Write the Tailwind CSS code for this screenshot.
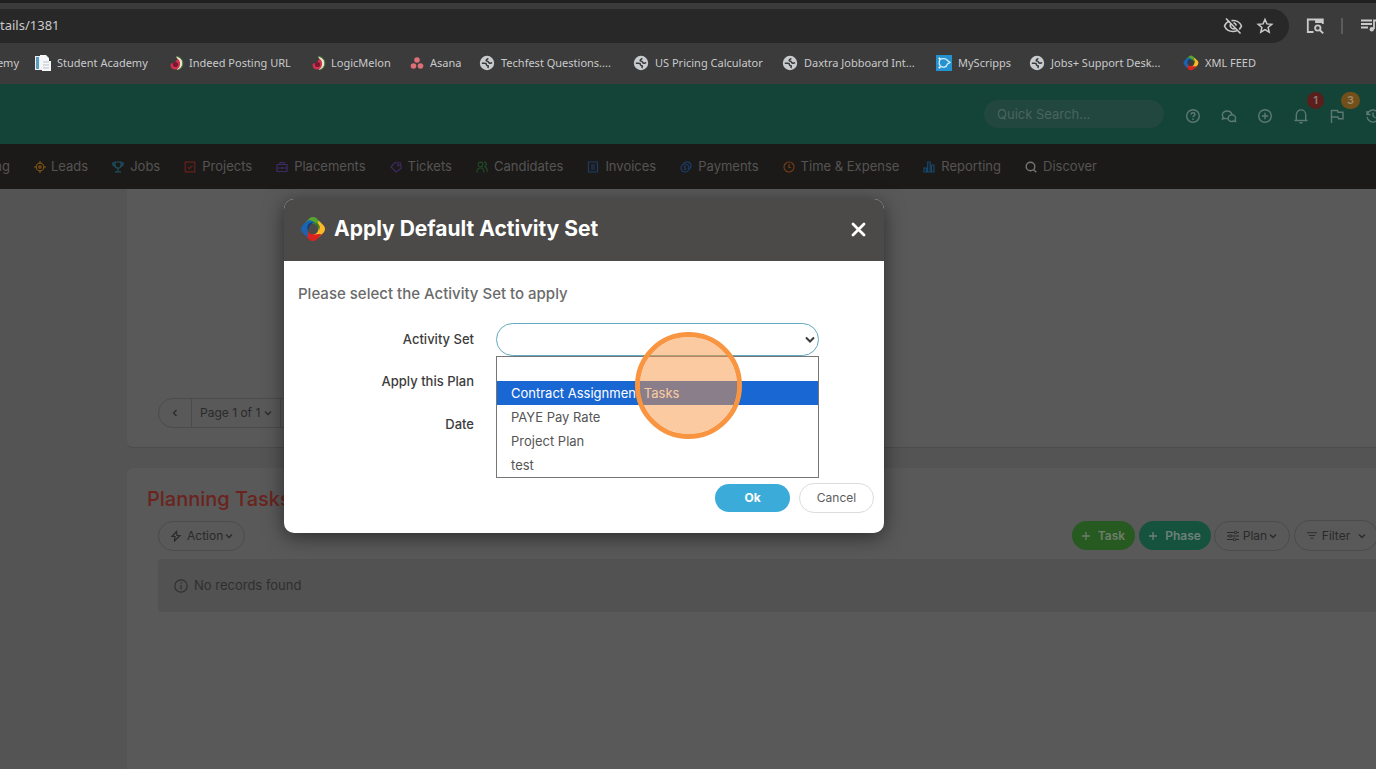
<!DOCTYPE html>
<html lang="en">
<head>
  <meta charset="UTF-8" />
  <meta name="viewport" content="width=device-width, initial-scale=1.0">
  <title>Apply Default Activity Set</title>
  <script src="https://cdn.jsdelivr.net/npm/@tailwindcss/browser@4"></script>
</head>

<body class="relative flex min-h-screen flex-col overflow-hidden bg-[#545454] font-['Inter','Liberation_Sans',sans-serif] text-[13px] text-[#2a2a2a]">

<!-- Shared icons -->
<svg class="hidden">
  <symbol id="globe" viewBox="0 0 16 16">
    <circle cx="8" cy="8" r="7.200" fill="#c9cccf"/>
    <path d="M2.800 8.200h3c1 0 1.700.6 1.700 1.500s.8 1 1.500 1c.5.300.3 1.400-.3 2.300M9 3.200c-.3 1.300-1.800 1-1.800 2.200 0 1 1.300.8 1.900 1.200.8.500.5 1.600 1.600 1.700 1 .1 1.400-.5 2.500-.5" fill="none" stroke="#3b3b3b" stroke-width="1.600"/>
  </symbol>
  <symbol id="melon" viewBox="0 0 16 16">
    <path d="M7 1.500c8 1 9 11 1.500 13.500l-1-2c4-2 4-6 1.500-8z" fill="#e6e6c8"/>
    <path d="M7.500 1.300c8 1 8.500 11 1.500 13.700" fill="none" stroke="#4d7a3d"/>
    <path d="M8.500 3.500C13 7 11 14.500 6.500 14.500 2.500 14.500.8 11 2 8.500c2.500.500 5-1.500 6.500-5z" fill="#cf3350"/>
    <circle cx="6.500" cy="9.500" r="2.600" fill="#7d1730"/>
  </symbol>
  <symbol id="swirl" viewBox="0 0 26 26">
    <path d="M4.500 7.500 9.500 2.300c2-1.800 5-1.800 7 0l4.500 4.700c1.500 2.500.5 5.500-2.300 7.500C19 10.500 16.500 7.700 13 7.700 9.500 7.200 7 8.500 4.500 7.500z" fill="#57a52f"/>
    <path d="M4.500 7.500 9.500 2.300c2-1.800 5-1.800 7 0l4.500 4.700c1.500 2.500.5 5.500-2.300 7.500C19 10.500 16.500 7.700 13 7.700 9.500 7.200 7 8.500 4.500 7.500z" fill="#fcb827" transform="rotate(90 13 13)"/>
    <path d="M4.500 7.500 9.500 2.300c2-1.800 5-1.800 7 0l4.500 4.700c1.500 2.500.5 5.500-2.300 7.500C19 10.500 16.500 7.700 13 7.700 9.500 7.200 7 8.500 4.500 7.500z" fill="#d8231f" transform="rotate(180 13 13)"/>
    <path d="M4.500 7.500 9.500 2.300c2-1.800 5-1.800 7 0l4.500 4.700c1.500 2.500.5 5.500-2.300 7.500C19 10.500 16.500 7.700 13 7.700 9.500 7.200 7 8.500 4.500 7.500z" fill="#1b62b0" transform="rotate(270 13 13)"/>
    <path d="M8 14.500C6 9 10 5.500 15.500 6.500c-5 .5-6.500 3-7.500 8z" fill="#0b3a7a"/>
    <path d="M13 7.700c4 0 6 3 5.700 6.800 1.500-1.500 1.500-5-.7-6.500s-4-1-5-.3z" fill="#2f7a22"/>
  </symbol>
  <symbol id="chevron" viewBox="0 0 8 8">
    <path d="M1 2.500 4 5.500 7 2.500" fill="none" stroke="currentColor" stroke-width="1.300"/>
  </symbol>
</svg>

<!-- Browser toolbar -->
<div class="h-[84px] border-t-3 border-[#202020] bg-[#3b3b3b] pt-[6px] font-['Noto_Sans','Open_Sans',sans-serif] text-[#c9cacb]">
  <div class="flex h-[34px] items-center">
    <div class="flex h-full grow items-center rounded-r-full bg-[#282828] pr-[14px]">
      <span class="text-[13px]">tails/1381</span>
      <svg class="ml-auto size-5" viewBox="0 0 20 20" fill="none" stroke="currentColor" stroke-width="1.600">
        <path d="M6.500 5.200C3.800 6 2.200 8 1.500 10c1.300 3.200 4.500 5.500 8.500 5.500 1.400 0 2.800-.3 4-.9M8.500 4.600c4.500-.6 8.500 1.700 10 5.400a9 9 0 0 1-2.300 3.300"/>
        <path d="M8 7.500a3.300 3.300 0 0 0 4.500 4.700M10.500 6.800a3.300 3.300 0 0 1 2.700 2.900M3 2.500 17.500 17.500"/>
      </svg>
      <svg class="ml-3 size-5" viewBox="0 0 20 20" fill="none" stroke="currentColor" stroke-width="1.500">
        <path d="m10 3.500 1.900 4.400 4.900.4-3.700 3.200 1.100 4.700-4.200-2.500-4.200 2.500 1.100-4.700-3.700-3.200 4.900-.4z"/>
      </svg>
    </div>
    <svg class="ml-4 size-5" viewBox="0 0 20 20" fill="none" stroke="currentColor" stroke-width="1.800">
      <path d="M8.500 16H2.800V3.500h15V8M11 3.500v3.500"/>
      <path d="M11 3h7v4h-7z" fill="currentColor" stroke="none"/>
      <circle cx="12.800" cy="12" r="2.700"/><path d="m14.800 14 3.400 3.400"/>
    </svg>
    <span class="ml-4 h-4 w-[2px] bg-[#5c5c5c]"></span>
    <svg class="-mr-[3px] ml-4 size-5" viewBox="0 0 20 20" fill="none" stroke="currentColor" stroke-width="1.800">
      <path d="M2 4.500h11M2 8h11M2 11.500h7M15 13V4.500h4"/><circle cx="12.800" cy="13.200" r="2.200" fill="currentColor" stroke="none"/>
    </svg>
  </div>

  <nav class="flex h-[40px] items-center text-[11px] whitespace-nowrap" aria-label="Bookmarks">
    <a href="#" class="mr-4 flex w-[19px] shrink-0 justify-end">emy</a>
    <a href="#" class="flex w-[134px] shrink-0 items-center gap-[6px]">
      <svg class="size-4" viewBox="0 0 16 16"><path d="M0 1h11v14H0z" fill="#e8eef2"/><path d="M1 2h3v12H1z" fill="#5a9cbc"/><path d="M5 0h6l3 3v3h2v10H7v-2H5z" fill="#f4f6f8"/><path d="M8 7h6M8 10h6M8 13h6" stroke="#b9c3cc"/></svg>
      Student Academy
    </a>
    <a href="#" class="flex w-[142px] shrink-0 items-center gap-1"><svg class="size-4"><use href="#melon"/></svg>Indeed Posting URL</a>
    <a href="#" class="flex w-[99px] shrink-0 items-center gap-1"><svg class="size-4"><use href="#melon"/></svg>LogicMelon</a>
    <a href="#" class="flex w-[69px] shrink-0 items-center gap-[6px]">
      <svg class="size-[14px]" viewBox="0 0 14 14" fill="#dd7076"><circle cx="7" cy="4" r="2.800"/><circle cx="3.500" cy="10" r="2.800"/><circle cx="10.500" cy="10" r="2.800"/></svg>
      Asana
    </a>
    <a href="#" class="flex w-[154px] shrink-0 items-center gap-[6px]"><svg class="size-4"><use href="#globe"/></svg>Techfest Questions....</a>
    <a href="#" class="flex w-[149px] shrink-0 items-center gap-[6px]"><svg class="size-4"><use href="#globe"/></svg>US Pricing Calculator</a>
    <a href="#" class="flex w-[154px] shrink-0 items-center gap-[6px]"><svg class="size-4"><use href="#globe"/></svg>Daxtra Jobboard Int...</a>
    <a href="#" class="flex w-[93px] shrink-0 items-center gap-[6px]">
      <svg class="size-4" viewBox="0 0 16 16"><path d="M0 0h16v16H0z" fill="#2492d1"/><path d="M4 4.500c2.500-1.500 6-1 7.500 1l2.500 2-2.500 1.500c-1 3.500-5 4-7 2C3 9.500 3 6.500 4 4.500z" fill="none" stroke="#d8f0fb" stroke-width="1.300"/><circle cx="3.500" cy="3.500" r="1.100" fill="#fff"/><circle cx="3.500" cy="12.500" r="1.100" fill="#fff"/></svg>
      MyScripps
    </a>
    <a href="#" class="flex w-[154px] shrink-0 items-center gap-[6px]"><svg class="size-4"><use href="#globe"/></svg>Jobs+ Support Desk...</a>
    <a href="#" class="flex shrink-0 items-center gap-[6px]"><svg class="size-4"><use href="#swirl"/></svg>XML FEED</a>
  </nav>
</div>

<!-- App header -->
<header class="flex h-[60px] items-center justify-end bg-[#144338] text-[#5d7a72]">
  <input type="text" aria-label="Quick Search" placeholder="Quick Search..." class="mr-[21px] h-7 w-[180px] rounded-full bg-[#22473e] px-[13px] text-[13px] placeholder:text-[#49655d]">
  <div class="-mr-[5px] flex gap-5 pt-1">
    <button aria-label="Help"><svg class="size-4" viewBox="0 0 16 16" fill="none" stroke="currentColor" stroke-width="1.400"><circle cx="8" cy="8" r="6.300"/><path d="M6.200 6.500c0-2.300 3.700-2.300 3.700 0 0 1.300-1.900 1.300-1.900 2.700M8 10.500V12"/></svg></button>
    <button aria-label="Chat"><svg class="size-4" viewBox="0 0 16 16" fill="none" stroke="currentColor" stroke-width="1.400"><path d="M7 10.500c-1 .3-2 .2-3-.2L1.500 11l.6-2C.2 6 2.500 3 6 3c2.500 0 4.500 1.300 5 3.500"/><path d="M11 6.800c2.500 0 4.500 2.500 3.200 4.800l.4 2-2-.6C10 14.300 7.200 13 7.200 10.600 7.200 8.300 9 6.800 11 6.800z"/></svg></button>
    <button aria-label="Add"><svg class="size-4" viewBox="0 0 16 16" fill="none" stroke="currentColor" stroke-width="1.400"><circle cx="8" cy="8" r="6.300"/><path d="M8 4.800v6.400M4.800 8h6.400"/></svg></button>
    <button aria-label="Notifications" class="relative">
      <svg class="size-4" viewBox="0 0 16 16" fill="none" stroke="currentColor" stroke-width="1.400"><path d="M1.500 12.500h13M3.300 12.500V7C3.300.2 12.700.2 12.700 7v5.500M6.500 14.800h3"/></svg>
      <span class="absolute -top-4 left-[14px] size-[17px] rounded-full bg-[#5a1f1b] text-[11px] leading-[17px] font-semibold text-[#8b7a78]">1</span>
    </button>
    <button aria-label="Flags" class="relative">
      <svg class="size-4" viewBox="0 0 16 16" fill="none" stroke="currentColor" stroke-width="1.400"><path d="M2.500 15V2.500h6l.5 1.700h5v6.500H9.500L9 9H2.500"/></svg>
      <span class="absolute -top-4 left-3 h-[17px] w-[19px] rounded-full bg-[#73501a] text-[11px] leading-[17px] font-semibold text-[#9b8a6c]">3</span>
    </button>
    <button aria-label="History"><svg class="size-4" viewBox="0 0 16 16" fill="none" stroke="currentColor" stroke-width="1.400"><path d="M2 3v3.500h3.500M2.300 6A6 6 0 1 1 2 9M8 4.500V8l2.500 2"/></svg></button>
  </div>
</header>

<!-- Main navigation -->
<nav class="flex h-[45px] items-center gap-6 bg-[#1c1a19] text-[#555453] whitespace-nowrap" aria-label="Main">
  <a href="#" class="flex w-[10px] justify-end">ng</a>
  <a href="#" class="flex items-center gap-[5px]"><svg class="size-3" viewBox="0 0 12 12" fill="none" stroke="#805313" stroke-width="1.200"><circle cx="6" cy="6" r="3.800"/><circle cx="6" cy="6" r="1.200"/><path d="M6 0v2.500M6 9.500V12M0 6h2.500M9.500 6H12"/></svg>Leads</a>
  <a href="#" class="flex items-center gap-[6px]"><svg class="size-3" viewBox="0 0 12 12" fill="none" stroke="#1b5362" stroke-width="1.200"><path d="M3 1h6v3.500c0 3.500-6 3.500-6 0zM3 2H.7c0 2 .8 3 2.500 3.200M9 2h2.300c0 2-.8 3-2.500 3.200M6 7v3M3 10.800h6"/></svg>Jobs</a>
  <a href="#" class="flex items-center gap-[6px]"><svg class="size-3" viewBox="0 0 12 12" fill="none" stroke="#65211a" stroke-width="1.200"><path d="M1.200 1.200h9.600v9.600H1.200zM3.800 6l1.700 1.700L8.500 4.500"/></svg>Projects</a>
  <a href="#" class="flex items-center gap-[6px]"><svg class="size-3" viewBox="0 0 12 12" fill="none" stroke="#3c2b63" stroke-width="1.200"><path d="M1 3.500h10v7H1zM4 3.500v-2h4v2M1 7h10M6 6v2"/></svg>Placements</a>
  <a href="#" class="flex items-center gap-[6px]"><svg class="size-3" viewBox="0 0 12 12" fill="none" stroke="#3c2b63" stroke-width="1.200"><path d="m1 6 4-4.500 5.500.5.500 5.500-5 3.500z"/><circle cx="8.300" cy="4.200" r=".7"/></svg>Tickets</a>
  <a href="#" class="flex items-center gap-[6px]"><svg class="size-3" viewBox="0 0 12 12" fill="none" stroke="#204a26" stroke-width="1.200"><circle cx="4.500" cy="3.500" r="2.300"/><path d="M1 11.500C1 8 2.500 7 4.500 7S8 8 8 11.500M8 1.200c3 0 3 4.300.3 4.500 2.200.5 3 2 3 5"/></svg>Candidates</a>
  <a href="#" class="flex items-center gap-[6px]"><svg class="size-3" viewBox="0 0 12 12" fill="none" stroke="#1c3c63" stroke-width="1.200"><path d="M1.500 1h9v10h-9zM4 4h4M4 6h4M4 8h4"/></svg>Invoices</a>
  <a href="#" class="flex items-center gap-[6px]"><svg class="size-3" viewBox="0 0 12 12" fill="none" stroke="#1c3c6b" stroke-width="1.200"><circle cx="5" cy="7" r="4"/><path d="M3.500 2.500C6 0 11 .5 11 4.500c0 2-.7 3-2 4M6.500 5.200c-2-.7-3 .8-1.500 1.600 1.700.8.500 2.500-1.300 1.500"/></svg>Payments</a>
  <a href="#" class="flex items-center gap-[6px]"><svg class="size-3" viewBox="0 0 12 12" fill="none" stroke="#703b17" stroke-width="1.200"><circle cx="6" cy="6" r="5"/><path d="M6 3v3.500h2"/></svg>Time &amp; Expense</a>
  <a href="#" class="flex items-center gap-[6px]"><svg class="size-3" viewBox="0 0 12 12" fill="none" stroke="#17476b" stroke-width="1.200"><path d="M1 7h2.500v4H1zM4.700 1h2.500v10H4.700zM8.500 4H11v7H8.500z"/></svg>Reporting</a>
  <a href="#" class="flex items-center gap-[6px]"><svg class="size-3" viewBox="0 0 12 12" fill="none" stroke="#777573" stroke-width="1.400"><circle cx="5.500" cy="5.500" r="4.300"/><path d="m8.500 8.500 2.800 2.800"/></svg>Discover</a>
</nav>

<!-- Page content -->
<main class="flex grow flex-col gap-5 pl-[127px]">
  <section class="flex h-[259px] items-end rounded-bl-md border-b border-[#4c4c4c] bg-[#595959] pb-[19px] pl-[31px]">
    <div class="flex h-[30px] items-center rounded-full border border-[#4b4b4b]">
      <button aria-label="Previous page" class="flex h-full w-8 items-center justify-center"><svg class="size-2 rotate-90"><use href="#chevron"/></svg></button>
      <button class="flex h-full items-center gap-1 border-l border-[#4b4b4b] px-2 text-xs">Page 1 of 1 <svg class="size-2"><use href="#chevron"/></svg></button>
      <button aria-label="Next page" class="flex h-full w-8 items-center justify-center border-l border-[#4b4b4b]"><svg class="size-2 -rotate-90"><use href="#chevron"/></svg></button>
    </div>
  </section>

  <section class="grow rounded-tl-md bg-[#595959] pt-4">
    <h2 class="pl-5 text-xl leading-[30px] font-medium text-[#6b231e]">Planning Tasks</h2>
    <div class="-mr-[2px] flex items-center gap-1 pt-[6px] pl-[31px]">
      <button class="mr-auto flex h-[30px] items-center gap-[5px] rounded-full border border-[#4b4b4b] px-[11px] text-xs">
        <svg class="size-3" viewBox="0 0 12 12" fill="none" stroke="#2a2a2a" stroke-width="1.200"><path d="M6.500 1.500 2 6.500h3L4.500 11 10 5.500H7z"/></svg>
        <span class="flex items-center gap-[2px]">Action <svg class="size-2"><use href="#chevron"/></svg></span>
      </button>
      <button class="flex h-[29px] w-[63px] items-center justify-center gap-2 rounded-full bg-[#275a20] text-xs font-semibold text-[#6f7d6c]">
        <svg class="size-2" viewBox="0 0 8 8" stroke="currentColor" stroke-width="1.300"><path d="M4 0v8M0 4h8"/></svg>Task
      </button>
      <button class="-mr-px flex h-[29px] w-[72px] items-center justify-center gap-2 rounded-full bg-[#15533f] text-xs font-semibold text-[#6f8079]">
        <svg class="size-2" viewBox="0 0 8 8" stroke="currentColor" stroke-width="1.300"><path d="M4 0v8M0 4h8"/></svg>Phase
      </button>
      <button class="flex h-[30px] w-[76px] items-center justify-center rounded-full border border-[#4b4b4b] text-xs">
        <svg class="mr-1 size-3" viewBox="0 0 12 12" fill="none" stroke="currentColor"><path d="M0 2.500h7M10 2.500h2M0 6h2M5 6h7M0 9.500h6M9 9.500h3"/><circle cx="8.500" cy="2.500" r="1.300"/><circle cx="3.500" cy="6" r="1.300"/><circle cx="7.500" cy="9.500" r="1.300"/></svg>
        Plan <svg class="ml-[2px] size-2"><use href="#chevron"/></svg>
      </button>
      <button class="flex h-[31px] w-[84px] items-center justify-center rounded-full border border-[#4b4b4b] text-xs">
        <svg class="mr-[5px] size-[11px]" viewBox="0 0 12 12" stroke="currentColor"><path d="M1 3h11M3 6h7M5 9h3"/></svg>
        Filter <svg class="ml-2 size-2"><use href="#chevron"/></svg>
      </button>
    </div>
    <div class="mt-2 ml-[31px] flex h-[53px] items-center gap-[6px] rounded-l bg-[#525252] pl-4 text-[#2f2f2f]">
      <svg class="size-[14px]" viewBox="0 0 14 14" fill="none" stroke="currentColor" stroke-width="1.200"><circle cx="7" cy="7" r="6.200"/><path d="M7 6v4.500M7 3.300v1.400"/></svg>
      No records found
    </div>
  </section>
</main>

<!-- Dialog -->
<div role="dialog" aria-labelledby="dialog-title" class="absolute top-[199px] left-[284px] w-[600px] rounded-[10px] bg-white shadow-[0_4px_20px_rgba(0,0,0,0.5)]">
  <div class="flex h-[62px] items-center rounded-t-[10px] bg-[#4b4a48] px-4 pb-[2px] text-white">
    <svg class="size-[26px]"><use href="#swirl"/></svg>
    <h1 id="dialog-title" class="ml-2 text-[21px] font-bold">Apply Default Activity Set</h1>
    <button aria-label="Close" class="mr-[2px] ml-auto"><svg class="size-[15px]" viewBox="0 0 15 15" stroke="currentColor" stroke-width="2.800" stroke-linecap="round"><path d="m2 2 11 11M13 2 2 13"/></svg></button>
  </div>
  <form class="px-[10px] pb-5">
    <p class="px-1 pt-[21px] text-[15px] leading-6 font-medium text-[#6a6a6a]">Please select the Activity Set to apply</p>
    <div class="grid grid-cols-[180px_1fr] items-center gap-x-[22px] pt-[17px] font-medium text-[#3c3c3c]">
      <label for="activity-set" class="text-right">Activity Set</label>
      <div class="relative h-[33px] w-[323px]">
        <select id="activity-set" class="h-[33px] w-full appearance-none rounded-full border border-[#62a9bd] bg-white"><option></option></select>
        <svg class="pointer-events-none absolute top-[12px] right-1 size-[10px]" viewBox="0 0 10 8" fill="none" stroke="#3a3a3a" stroke-width="2"><path d="m1 1.500 4 4 4-4"/></svg>
        <ul role="listbox" aria-label="Activity Set" class="absolute top-full left-0 z-10 w-full border border-[#767676] bg-white font-normal text-[#555] *:h-6 *:px-[14px] *:leading-6">
          <li role="option"></li>
          <li role="option" class="bg-[#1967d2] text-white">Contract Assignment Tasks</li>
          <li role="option">PAYE Pay Rate</li>
          <li role="option">Project Plan</li>
          <li role="option">test</li>
        </ul>
      </div>
      <span class="col-start-1 flex h-[52px] items-center justify-end">Apply this Plan</span>
      <span class="col-start-1 flex h-[34px] items-center justify-end">Date</span>
    </div>
    <div class="flex items-center justify-end gap-[9px] pt-[41px]">
      <button type="button" class="h-7 w-[75px] rounded-full bg-[#3bacd9] text-xs font-bold text-white">Ok</button>
      <button type="button" class="h-[30px] w-[75px] rounded-full border border-[#dcdcdc] text-xs text-[#5c5c5c]">Cancel</button>
    </div>
  </form>
</div>

<!-- Click marker -->
<div class="pointer-events-none absolute top-[332px] left-[635px] z-20 size-[107px] rounded-full border-5 border-[#f99541] bg-[#f99541]/50 bg-clip-padding"></div>

</body>
</html>
